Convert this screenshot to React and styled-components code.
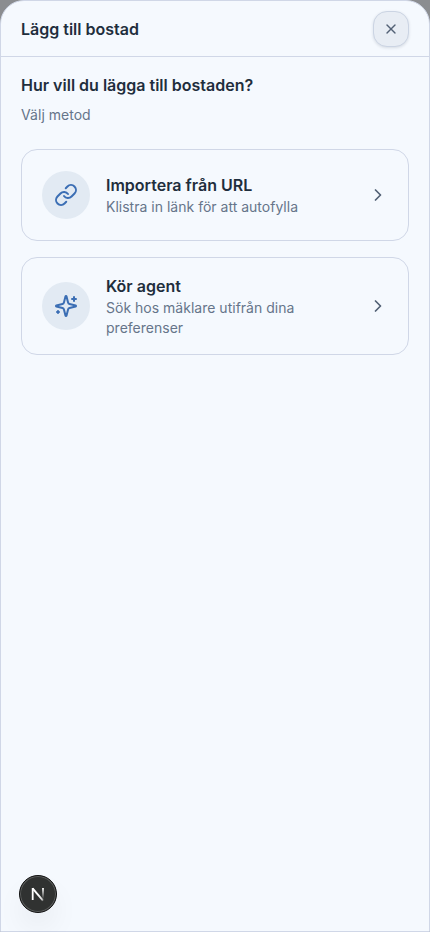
import styled, { createGlobalStyle } from "styled-components";
import { ChevronRight, Link, X } from "lucide-react";

// Four-point star with two small plus signs
const SparklesIcon = () => (
  <svg
    width="24"
    height="24"
    viewBox="0 0 24 24"
    fill="none"
    stroke="currentColor"
    strokeWidth="2"
    strokeLinecap="round"
    strokeLinejoin="round"
  >
    <path d="M9.937 15.5A2 2 0 0 0 8.5 14.063l-6.135-1.582a.5.5 0 0 1 0-.962L8.5 9.936A2 2 0 0 0 9.937 8.5l1.582-6.135a.5.5 0 0 1 .963 0L14.063 8.5A2 2 0 0 0 15.5 9.937l6.135 1.581a.5.5 0 0 1 0 .964L15.5 14.063a2 2 0 0 0-1.437 1.437l-1.582 6.135a.5.5 0 0 1-.963 0z" />
    <path d="M20 3v4" />
    <path d="M22 5h-4" />
    <path d="M4 17v2" />
    <path d="M5 18H3" />
  </svg>
);

const NextMark = () => (
  <svg width="38" height="38" viewBox="0 0 38 38" fill="none">
    <defs>
      <linearGradient id="diagonal" x1="20" y1="20" x2="25" y2="26.5" gradientUnits="userSpaceOnUse">
        <stop stopColor="#fff" />
        <stop offset="0.6" stopColor="#fff" stopOpacity="0.8" />
        <stop offset="1" stopColor="#fff" stopOpacity="0.1" />
      </linearGradient>
      <linearGradient id="stem" x1="24" y1="13" x2="24" y2="24" gradientUnits="userSpaceOnUse">
        <stop stopColor="#fff" />
        <stop offset="1" stopColor="#fff" stopOpacity="0" />
      </linearGradient>
    </defs>
    <path d="M13.6 13.4L24 25.6" stroke="url(#diagonal)" strokeWidth="1.9" />
    <path d="M13.7 25V13" stroke="#fff" strokeWidth="1.8" />
    <path d="M24 13v11" stroke="url(#stem)" strokeWidth="1.8" />
  </svg>
);

const methods = [
  {
    title: "Importera från URL",
    description: "Klistra in länk för att autofylla",
    icon: <Link size={24} />,
  },
  {
    title: "Kör agent",
    description: "Sök hos mäklare utifrån dina preferenser",
    icon: <SparklesIcon />,
  },
];

const App = () => {
  return (
    <>
      <GlobalStyle />
      <StyledBackdrop>
        <StyledSheet>
          <StyledHeader>
            <StyledHeading>Lägg till bostad</StyledHeading>
            <StyledClose aria-label="Stäng">
              <X size={16} />
            </StyledClose>
          </StyledHeader>
          <StyledContent>
            <StyledIntro>
              <StyledHeading>Hur vill du lägga till bostaden?</StyledHeading>
              <StyledText>Välj metod</StyledText>
            </StyledIntro>
            <StyledMethods>
              {methods.map((method) => (
                <StyledCard key={method.title}>
                  <StyledIcon>{method.icon}</StyledIcon>
                  <StyledCardText>
                    <StyledHeading as="h3">{method.title}</StyledHeading>
                    <StyledText>{method.description}</StyledText>
                  </StyledCardText>
                  <StyledChevron size={20} strokeWidth={2.1} />
                </StyledCard>
              ))}
            </StyledMethods>
          </StyledContent>
        </StyledSheet>
        <StyledDevBadge aria-label="Open Next.js Dev Tools">
          <NextMark />
        </StyledDevBadge>
      </StyledBackdrop>
    </>
  );
};

const GlobalStyle = createGlobalStyle`
  * {
    box-sizing: border-box;
    margin: 0;
    padding: 0;
  }
  body {
    font-family: Inter, "Liberation Sans", sans-serif;
    color: #1f2e3d;
  }
  button {
    font: inherit;
    color: inherit;
    cursor: pointer;
  }
`;

const StyledBackdrop = styled.div`
  height: 100vh;
  background: #8b8d90;
`;

const StyledSheet = styled.div`
  display: flex;
  flex-direction: column;
  height: 100%;
  background: #f5f9fe;
  border: 1px solid #d0d7e7;
  border-radius: 24px 24px 0 0;
`;

const StyledHeader = styled.header`
  display: flex;
  align-items: center;
  justify-content: space-between;
  padding: 10px 20px 9px;
  border-bottom: 1px solid #d0d7e7;
`;

const StyledHeading = styled.h2`
  font-size: 16px;
  line-height: 24px;
  font-weight: 600;
`;

const StyledText = styled.p`
  font-size: 14px;
  line-height: 20px;
  letter-spacing: 0.01px;
  color: #66758a;
`;

const StyledClose = styled.button`
  display: flex;
  align-items: center;
  justify-content: center;
  width: 36px;
  height: 36px;
  color: #526175;
  background: #e8edf4;
  border: 1px solid #cbd4e3;
  border-radius: 14px;
  box-shadow: 0 1px 3px rgba(31, 45, 61, 0.14);
`;

const StyledContent = styled.main`
  display: flex;
  flex-direction: column;
  gap: 24px;
  padding: 16px 20px;
`;

const StyledIntro = styled.div`
  display: flex;
  flex-direction: column;
  gap: 8px;
`;

const StyledMethods = styled.div`
  display: flex;
  flex-direction: column;
  gap: 16px;
`;

const StyledCard = styled.button`
  display: flex;
  align-items: center;
  gap: 16px;
  min-height: 92px;
  padding: 16px 20px;
  text-align: left;
  background: transparent;
  border: 1px solid #d0d7e7;
  border-radius: 16px;
`;

const StyledIcon = styled.span`
  display: flex;
  flex-shrink: 0;
  align-items: center;
  justify-content: center;
  width: 48px;
  height: 48px;
  color: #3b6eb4;
  background: #e2eaf3;
  border-radius: 50%;
`;

const StyledCardText = styled.div`
  flex: 1;
`;

const StyledChevron = styled(ChevronRight)`
  flex-shrink: 0;
  color: #526175;
`;

// Floats over the sheet in the bottom left corner
const StyledDevBadge = styled.button`
  position: fixed;
  left: 19px;
  bottom: 19px;
  display: flex;
  align-items: center;
  justify-content: center;
  width: 38px;
  height: 38px;
  background: #303231;
  border: 1px solid #111;
  border-radius: 50%;
  box-shadow:
    inset 0 0 0 1px #5c5e5d,
    0 16px 32px -8px rgba(0, 0, 0, 0.14);
  svg {
    flex-shrink: 0;
  }
`;

export default App;
